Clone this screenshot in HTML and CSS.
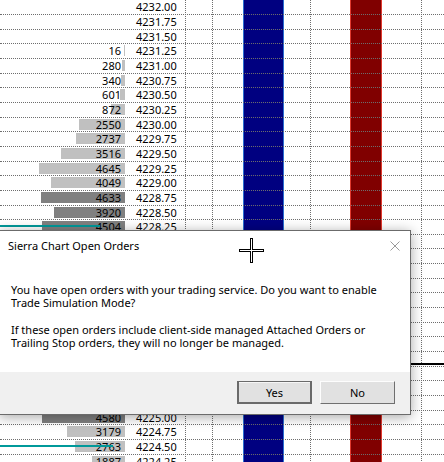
FILE: index.html
```html
<!DOCTYPE html>
<html lang="en">
<head>
    <meta charset="UTF-8">
    <title>ES Price Ladder</title>
    <link rel="stylesheet" href="styles.css">
</head>
<body>

<div class="chart">

    <!-- background columns: grid lines and the bid / ask stripes -->
    <div class="columns">
        <div class="col"></div>
        <div class="col"></div>
        <div class="col"><div class="stripe stripe-bid"></div></div>
        <div class="col"><div class="stripe stripe-ask"></div></div>
        <div class="col"></div>
    </div>

    <!-- one row per tick (rows under the message box are left blank) -->
    <div class="rows">
        <div class="row"><div class="vol"></div><div class="price">4232.00</div></div>
        <div class="row"><div class="vol"></div><div class="price">4231.75</div></div>
        <div class="row"><div class="vol"></div><div class="price">4231.50</div></div>
        <div class="row"><div class="vol"><span class="bar" style="width:1px"></span><span class="qty">16</span></div><div class="price">4231.25</div></div>
        <div class="row"><div class="vol"><span class="bar" style="width:3px"></span><span class="qty">280</span></div><div class="price">4231.00</div></div>
        <div class="row"><div class="vol"><span class="bar" style="width:4px"></span><span class="qty">340</span></div><div class="price">4230.75</div></div>
        <div class="row"><div class="vol"><span class="bar" style="width:5px"></span><span class="qty">601</span></div><div class="price">4230.50</div></div>
        <div class="row"><div class="vol"><span class="bar" style="width:14px"></span><span class="qty">872</span></div><div class="price">4230.25</div></div>
        <div class="row"><div class="vol"><span class="bar" style="width:46px"></span><span class="qty">2550</span></div><div class="price">4230.00</div></div>
        <div class="row"><div class="vol"><span class="bar" style="width:49px"></span><span class="qty">2737</span></div><div class="price">4229.75</div></div>
        <div class="row"><div class="vol"><span class="bar" style="width:64px"></span><span class="qty">3516</span></div><div class="price">4229.50</div></div>
        <div class="row"><div class="vol"><span class="bar" style="width:86px"></span><span class="qty">4645</span></div><div class="price">4229.25</div></div>
        <div class="row"><div class="vol"><span class="bar" style="width:74px"></span><span class="qty">4049</span></div><div class="price">4229.00</div></div>
        <div class="row"><div class="vol"><span class="bar dark" style="width:84px"></span><span class="qty">4633</span></div><div class="price">4228.75</div></div>
        <div class="row"><div class="vol"><span class="bar dark" style="width:71px"></span><span class="qty">3920</span></div><div class="price">4228.50</div></div>
        <div class="row"><div class="vol"><span class="bar dark" style="width:83px"></span><span class="qty">4504</span></div><div class="price">4228.25</div><div class="order-line" style="width:100px"></div></div>
        <div class="row"></div>
        <div class="row"></div>
        <div class="row"></div>
        <div class="row"></div>
        <div class="row"></div>
        <div class="row"></div>
        <div class="row"></div>
        <div class="row"></div>
        <div class="row"><div class="last-line"></div></div>
        <div class="row"></div>
        <div class="row"></div>
        <div class="row"></div>
        <div class="row"><div class="vol"><span class="bar dark" style="width:83px"></span><span class="qty">4580</span></div><div class="price">4225.00</div></div>
        <div class="row"><div class="vol"><span class="bar" style="width:58px"></span><span class="qty">3179</span></div><div class="price">4224.75</div></div>
        <div class="row"><div class="vol"><span class="bar" style="width:50px"></span><span class="qty">2763</span></div><div class="price">4224.50</div><div class="order-line" style="width:113px"></div></div>
        <div class="row"><div class="vol"><span class="bar" style="width:33px"></span><span class="qty">1887</span></div><div class="price">4224.25</div></div>
    </div>
</div>

<div class="dialog">
    <div class="dialog-title">
        <span class="title-text">Sierra Chart Open Orders</span>
        <svg class="close" width="10" height="10" viewBox="0 0 10 10">
            <path d="M0.5 0.5 L9.5 9.5 M9.5 0.5 L0.5 9.5" stroke="#9a9a9a" stroke-width="1" fill="none"/>
        </svg>
    </div>
    <div class="dialog-body">
        <p>You have open orders with your trading service. Do you want to enable<br>Trade Simulation Mode?</p>
        <p>If these open orders include client-side managed Attached Orders or<br>Trailing Stop orders, they will no longer be managed.</p>
    </div>
    <div class="dialog-buttons">
        <button class="btn btn-default">Yes</button>
        <button class="btn">No</button>
    </div>
</div>

<!-- mouse cursor -->
<svg class="cursor" width="25" height="25" viewBox="0 0 25 25" shape-rendering="crispEdges">
    <rect x="11" y="0" width="3" height="25" fill="#000"/>
    <rect x="0" y="11" width="25" height="3" fill="#000"/>
    <rect x="12" y="1" width="1" height="23" fill="#fff"/>
    <rect x="1" y="12" width="23" height="1" fill="#fff"/>
</svg>

</body>
</html>
```

FILE: styles.css
```css
* {
    box-sizing: border-box;
}

html, body {
    margin: 0;
    height: 462px;
    overflow: hidden;
    background: #fff;
}

body {
    position: relative;
    font-family: "Noto Sans", "Open Sans", sans-serif;
    font-size: 11px;
    color: #000;
}

/* chart: columns underneath, rows on top */
.chart {
    display: grid;
}

.columns, .rows {
    grid-area: 1 / 1;
}

.columns {
    display: grid;
    grid-template-columns: 185px 27px 98px 111px 1fr;
}

.col + .col {
    border-left: 1px dotted #6e6e6e;
}

.stripe {
    height: 100%;
}

.stripe-bid {
    margin-left: 30px;
    width: 41px;
    background: #000080;
    border-left: 1px solid #2a6fd0;
    border-right: 1px solid #2a6fd0;
}

.stripe-ask {
    margin-left: 39px;
    width: 32px;
    background: #800000;
    border-left: 1px solid #e0392e;
    border-right: 1px solid #e0392e;
}

.rows {
    padding-top: 0.333px;
}

.row {
    position: relative;
    display: flex;
    height: calc(44px / 3);
    border-bottom: 1px dotted #6e6e6e;
    line-height: 13.67px;
}

.vol {
    width: 125px;
    display: grid;
    justify-items: end;
    align-items: start;
}

.vol > * {
    grid-area: 1 / 1;
}

.bar {
    height: 11px;
    margin-top: 1px;
    background: #c0c0c0;
}

.bar.dark {
    background: #808080;
}

.qty {
    padding-right: 4px;
}

.price {
    padding-left: 11px;
}

.order-line {
    position: absolute;
    left: 0;
    top: 5px;
    height: 2px;
    background: #00999a;
}

.last-line {
    position: absolute;
    left: 0;
    right: 0;
    top: 11px;
    height: 2px;
    background: #000;
}

/* message box */
.dialog {
    position: absolute;
    left: -1px;
    top: 230px;
    width: 412px;
    height: 185px;
    display: flex;
    flex-direction: column;
    background: #fff;
    border: 1px solid #6b6b6b;
    box-shadow: 0 2px 12px rgba(0, 0, 0, 0.35);
}

.dialog-title {
    display: flex;
    align-items: flex-start;
    height: 30px;
    padding-left: 8px;
    line-height: 14px;
}

.title-text {
    margin-top: 8px;
}

.close {
    margin-left: auto;
    margin-right: 10px;
    margin-top: 10px;
}

.dialog-body {
    flex: 1;
    padding: 22px 11px 0;
    line-height: 13.33px;
    white-space: nowrap;
}

.dialog-body p {
    margin: 0 0 13.33px;
}

.dialog-buttons {
    display: flex;
    justify-content: flex-end;
    align-items: flex-start;
    gap: 8px;
    height: 42px;
    padding: 9px 15px 0 0;
    background: #f0f0f0;
}

.btn {
    width: 75px;
    height: 23px;
    padding: 0;
    font-family: inherit;
    font-size: 11px;
    color: #000;
    background: #e1e1e1;
    border: 1px solid;
    border-color: #fdfdfd #6f6f6f #6f6f6f #fdfdfd;
}

.btn-default {
    border: 1px solid #6a6a6a;
    box-shadow: inset 1px 0 0 #6a6a6a, inset -1px -1px 0 #6a6a6a, inset 0 1px 0 #f6f6f6;
}

.cursor {
    position: absolute;
    left: 239px;
    top: 238px;
}
```
